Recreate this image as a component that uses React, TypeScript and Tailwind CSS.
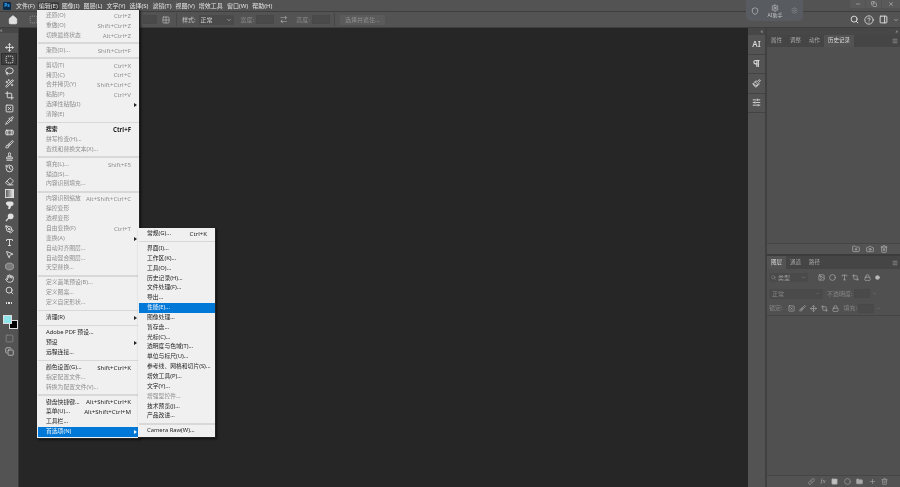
import {
  Bandage,
  Brush,
  ChevronDown,
  Circle,
  Crop,
  Eraser,
  Folder,
  FolderPlus,
  Grid2x2,
  Hand,
  HelpCircle,
  History,
  Home,
  Image,
  Lasso,
  Link,
  Lock,
  Menu,
  Minus,
  Move,
  MousePointer2,
  PenTool,
  Pipette,
  Plus,
  Search,
  Settings,
  Shield,
  SlidersHorizontal,
  Square,
  SquareDashed,
  Stamp,
  Trash2,
  Type,
  Wand2,
  X,
  Camera,
  Paintbrush,
  Pilcrow,
  PanelRight,
  SquareX,
  Copy,
} from "lucide-react";

type Row =
  | { sep: true }
  | { label: string; key?: string; off?: boolean; arrow?: boolean; bold?: boolean; on?: boolean };

const sep: Row = { sep: true };

const editMenu: Row[] = [
  { label: "还原(O)", key: "Ctrl+Z", off: true },
  { label: "重做(O)", key: "Shift+Ctrl+Z", off: true },
  { label: "切换最终状态", key: "Alt+Ctrl+Z", off: true },
  sep,
  { label: "渐隐(D)...", key: "Shift+Ctrl+F", off: true },
  sep,
  { label: "剪切(T)", key: "Ctrl+X", off: true },
  { label: "拷贝(C)", key: "Ctrl+C", off: true },
  { label: "合并拷贝(Y)", key: "Shift+Ctrl+C", off: true },
  { label: "粘贴(P)", key: "Ctrl+V", off: true },
  { label: "选择性粘贴(I)", off: true, arrow: true },
  { label: "清除(E)", off: true },
  sep,
  { label: "搜索", key: "Ctrl+F", bold: true },
  { label: "拼写检查(H)...", off: true },
  { label: "查找和替换文本(X)...", off: true },
  sep,
  { label: "填充(L)...", key: "Shift+F5", off: true },
  { label: "描边(S)...", off: true },
  { label: "内容识别填充...", off: true },
  sep,
  { label: "内容识别缩放", key: "Alt+Shift+Ctrl+C", off: true },
  { label: "操控变形", off: true },
  { label: "透视变形", off: true },
  { label: "自由变换(F)", key: "Ctrl+T", off: true },
  { label: "变换(A)", off: true, arrow: true },
  { label: "自动对齐图层...", off: true },
  { label: "自动混合图层...", off: true },
  { label: "天空替换...", off: true },
  sep,
  { label: "定义画笔预设(B)...", off: true },
  { label: "定义图案...", off: true },
  { label: "定义自定形状...", off: true },
  sep,
  { label: "清理(R)", arrow: true },
  sep,
  { label: "Adobe PDF 预设..." },
  { label: "预设", arrow: true },
  { label: "远程连接..." },
  sep,
  { label: "颜色设置(G)...", key: "Shift+Ctrl+K" },
  { label: "指定配置文件...", off: true },
  { label: "转换为配置文件(V)...", off: true },
  sep,
  { label: "键盘快捷键...", key: "Alt+Shift+Ctrl+K" },
  { label: "菜单(U)...", key: "Alt+Shift+Ctrl+M" },
  { label: "工具栏..." },
  { label: "首选项(N)", arrow: true, on: true },
];

const prefsMenu: Row[] = [
  { label: "常规(G)...", key: "Ctrl+K" },
  sep,
  { label: "界面(I)..." },
  { label: "工作区(K)..." },
  { label: "工具(O)..." },
  { label: "历史记录(H)..." },
  { label: "文件处理(F)..." },
  { label: "导出..." },
  { label: "性能(E)...", on: true },
  { label: "图像处理..." },
  { label: "暂存盘..." },
  { label: "光标(C)..." },
  { label: "透明度与色域(T)..." },
  { label: "单位与标尺(U)..." },
  { label: "参考线、网格和切片(S)..." },
  { label: "增效工具(P)..." },
  { label: "文字(Y)..." },
  { label: "增强型控件...", off: true },
  { label: "技术预览(J)..." },
  { label: "产品改进..." },
  sep,
  { label: "Camera Raw(W)..." },
];

const topMenu = ["文件(F)", "编辑(E)", "图像(I)", "图层(L)", "文字(Y)", "选择(S)", "滤镜(T)", "视图(V)", "增效工具", "窗口(W)", "帮助(H)"];

function GradientTool({ size }: { size?: number }) {
  return (
    <svg width={size} height={size} viewBox="0 0 10 10">
      <defs>
        <linearGradient id="grad-tool">
          <stop offset="0" stopColor="#555" />
          <stop offset="1" stopColor="#eee" />
        </linearGradient>
      </defs>
      <rect x="0.5" y="0.5" width="9" height="9" fill="url(#grad-tool)" stroke="#e2e2e2" />
    </svg>
  );
}

function SmudgeTool({ size }: { size?: number }) {
  return (
    <svg width={size} height={size} viewBox="0 0 10 10" fill="currentColor">
      <path d="M1 2.5C1 1 2.5 .5 4 .5h3c1.5 0 2.5 1 2.5 2.5S8.500 5.500 7 5.500L5.500 9H3.500l.5-3.500C2.500 5.500 1 4 1 2.500z" />
    </svg>
  );
}

function DodgeTool({ size }: { size?: number }) {
  return (
    <svg width={size} height={size} viewBox="0 0 10 10" fill="currentColor">
      <circle cx="6.300" cy="3.700" r="3.200" />
      <path d="M4.300 5.300L1 9" stroke="currentColor" strokeWidth="1.400" />
    </svg>
  );
}

function EllipseTool({ size }: { size?: number }) {
  return (
    <svg width={size} height={size} viewBox="0 0 10 10">
      <ellipse cx="5" cy="5" rx="4.500" ry="3.800" fill="#7a7a7a" stroke="#a8a8a8" />
    </svg>
  );
}

const tools: React.ComponentType<{ size?: number; strokeWidth?: number }>[] = [
  Move, SquareDashed, Lasso, Wand2, Crop, SquareX, Pipette, Bandage, Brush, Stamp,
  History, Eraser, GradientTool, SmudgeTool, DodgeTool, PenTool, Type, MousePointer2, EllipseTool, Hand, Search,
];

function MenuRows({ rows }: { rows: Row[] }) {
  return (
    <>
      {rows.map((r, i) =>
        "sep" in r ? (
          <div key={i} className="flex h-[5.2px] items-center">
            <div className="h-[1.5px] w-full bg-[#d8d8d8]" />
          </div>
        ) : (
          <div
            key={i}
            className={`flex h-[9.85px] items-center justify-between whitespace-nowrap pl-[8px] pr-[8px] text-[5.8px] ${
              r.on ? "bg-[#0078d7] text-[#f0f6fc]" : r.off ? "text-[#8e8e8e]" : "text-[#1e1e1e]"
            } ${r.bold ? "font-bold" : ""}`}
          >
            <span>{r.label}</span>
            {r.key && <span className="text-[6.1px]">{r.key}</span>}
            {r.arrow && (
              <span className={`-mr-[6px] h-0 w-0 border-y-[2.5px] border-l-[3px] border-y-transparent ${r.on ? "border-l-white" : "border-l-[#222]"}`} />
            )}
          </div>
        ),
      )}
    </>
  );
}

function OptLabel({ children }: { children: string }) {
  return <span className="text-[#8a8a8a]">{children}</span>;
}

function Field({ className }: { className: string }) {
  return <div className={`h-[9px] border border-[#484848] bg-[#4a4a4a] ${className}`} />;
}

function DockIcon({ children }: { children: React.ReactNode }) {
  return <div className="flex h-[19.5px] items-center justify-center border-b border-[#434343] text-[#d8d8d8]">{children}</div>;
}

function Tab({ label, active }: { label: string; active?: boolean }) {
  return (
    <div className={`flex h-full items-center whitespace-nowrap px-[4px] text-[5.5px] ${active ? "bg-[#535353] text-[#dcdcdc]" : "text-[#a8a8a8]"}`}>
      {label}
    </div>
  );
}

export default function App() {
  return (
    <div className="relative flex h-[487px] w-[900px] flex-col overflow-hidden bg-[#262626] font-['Noto_Sans','Noto_Sans_CJK_SC',sans-serif] text-[6px] leading-none blur-[0.25px]">
      {/* 顶部菜单 */}
      <div className="flex h-[11px] shrink-0 items-center bg-[#535353] text-[#e4e4e4]">
        <div className="ml-[3px] mr-[5px] flex h-[8px] w-[8px] items-center justify-center rounded-[1px] bg-[#0a2a4a] text-[5px] font-bold text-[#31a8ff]">
          Ps
        </div>
        <div className="flex items-center gap-[4.1px] whitespace-nowrap">
          {topMenu.map((m) => (
            <span key={m} className={m === "编辑(E)" ? "-mx-[1px] bg-[#3c3c3c] px-[1px] py-[1px]" : ""}>
              {m}
            </span>
          ))}
        </div>
        <div className="ml-auto flex h-full items-start gap-[1px] text-[#cfcfcf]">
          <div className="flex h-[8px] w-[15px] items-center justify-center bg-[#5a5a5a]"><Minus size={6} /></div>
          <div className="flex h-[8px] w-[15px] items-center justify-center bg-[#5a5a5a]"><Copy size={6} /></div>
          <div className="flex h-[8px] w-[18px] items-center justify-center bg-[#5a5a5a]"><X size={6} /></div>
        </div>
      </div>

      {/* 选项栏 */}
      <div className="flex h-[17px] shrink-0 items-center whitespace-nowrap border-y border-[#3f3f3f] bg-[#535353] text-[#bdbdbd]">
        <Home size={10} className="ml-[8px] fill-[#e0e0e0] text-[#e0e0e0]" />
        <SquareDashed size={9} className="ml-[11px] text-[#9a9a9a]" />
        <Field className="ml-[105px] w-[14px]" />
        <Grid2x2 size={8} className="ml-[5px] text-[#c0c0c0]" />
        <div className="ml-[6px] h-[13px] w-px bg-[#464646]" />
        <span className="ml-[5px] text-[#c8c8c8]">样式:</span>
        <div className="ml-[3px] flex h-[10px] w-[35px] items-center justify-between bg-[#4a4a4a] px-[2px] text-[#d0d0d0]">
          正常
          <ChevronDown size={6} />
        </div>
        <span className="ml-[7px]"><OptLabel>宽度:</OptLabel></span>
        <Field className="ml-[2px] w-[18px]" />
        <span className="ml-[6px] text-[7px] text-[#b0b0b0]">⇄</span>
        <span className="ml-[9px]"><OptLabel>高度:</OptLabel></span>
        <Field className="ml-[2px] w-[18px]" />
        <div className="ml-[4px] h-[13px] w-px bg-[#464646]" />
        <div className="ml-[5px] flex h-[10px] w-[45px] items-center justify-center bg-[#5a5a5a] text-[#8f8f8f]">选择并遮住...</div>
        <div className="ml-auto mr-px flex items-center gap-[5px] text-[#e0e0e0]">
          <Search size={9} strokeWidth={2.5} />
          <HelpCircle size={10} strokeWidth={2} />
          <PanelRight size={9} strokeWidth={2.5} />
          <ChevronDown size={6} />
        </div>
      </div>

      <div className="flex min-h-0 flex-1">
        {/* 左侧工具栏 */}
        <div className="flex w-[19px] shrink-0 flex-col items-center border-r border-[#3a3a3a] bg-[#535353]">
          <div className="mb-[8px] h-[5px] w-full bg-[#474747] text-[5px] leading-[5px] text-[#bbb]">«</div>
          {tools.map((Icon, i) => (
            <div key={i} className={`flex h-[12.2px] w-[16px] shrink-0 items-center justify-center text-[#e2e2e2] ${i === 1 ? "border border-[#2f2f2f] bg-[#3d3d3d]" : ""}`}>
              <Icon size={9} strokeWidth={2.4} />
            </div>
          ))}
          <div className="flex h-[12px] shrink-0 items-center gap-[1px] text-[#e0e0e0]">
            <span className="h-[1.5px] w-[1.5px] bg-current" />
            <span className="h-[1.5px] w-[1.5px] bg-current" />
            <span className="h-[1.5px] w-[1.5px] bg-current" />
          </div>
          <div className="relative mt-[2px] h-[22px] w-[16px] shrink-0">
            <div className="absolute left-[8px] top-[9px] h-[9px] w-[9px] border border-[#ddd] bg-black" />
            <div className="absolute left-[2px] top-[4px] h-[9px] w-[9px] border border-[#ddd] bg-[#8fe5ea]" />
          </div>
          <Square size={9} className="mt-[1px] text-[#8a8a8a]" />
          <Copy size={9} className="mt-[4px] text-[#cfcfcf]" />
        </div>

        {/* 画布 */}
        <div className="flex-1 bg-[#262626]" />

        {/* 折叠面板 */}
        <div className="flex w-[19px] shrink-0 flex-col border-r-2 border-[#404040] bg-[#535353]">
          <div className="h-[7px] bg-[#474747] pr-[2px] text-right text-[5px] leading-[7px] text-[#bbb]">«</div>
          <DockIcon><span className="text-[8px] font-semibold">AI</span></DockIcon>
          <DockIcon><Pilcrow size={9} strokeWidth={3} /></DockIcon>
          <DockIcon><Paintbrush size={9} strokeWidth={2.5} /></DockIcon>
          <DockIcon><SlidersHorizontal size={9} strokeWidth={2.5} /></DockIcon>
        </div>

        {/* 右侧面板 */}
        <div className="flex w-[133px] shrink-0 flex-col bg-[#505050]">
          <div className="h-[7px] shrink-0 bg-[#474747] pr-[2px] text-right text-[5px] leading-[7px] text-[#bbb]">»</div>
          <div className="flex h-[12px] shrink-0 items-center bg-[#454545] pr-[2px]">
            <Tab label="属性" />
            <Tab label="调整" />
            <Tab label="动作" />
            <Tab label="历史记录" active />
            <Menu size={6} className="ml-auto text-[#b8b8b8]" />
          </div>
          <div className="flex-1" />
          <div className="flex h-[11px] shrink-0 items-center justify-end gap-[6px] border-t border-[#454545] bg-[#535353] pr-[12px] text-[#b8b8b8]">
            <FolderPlus size={8} />
            <Camera size={8} />
            <Trash2 size={8} />
          </div>

          <div className="flex h-[15px] shrink-0 items-center border-t-2 border-[#3c3c3c] bg-[#454545] pr-[2px]">
            <Tab label="图层" active />
            <Tab label="通道" />
            <Tab label="路径" />
            <Menu size={6} className="ml-auto text-[#b8b8b8]" />
          </div>
          <div className="flex h-[17px] shrink-0 items-center gap-[4.5px] px-[2px] text-[#b8b8b8]">
            <div className="mr-[5px] flex h-[9px] w-[39px] items-center gap-[2px] bg-[#4a4a4a] px-[2px] text-[#9a9a9a]">
              <Search size={5} />
              类型
              <ChevronDown size={5} className="ml-auto" />
            </div>
            <Image size={7} />
            <Circle size={7} />
            <Type size={7} />
            <Crop size={7} />
            <Lock size={7} />
            <Circle size={5} className="fill-current" />
          </div>
          <div className="flex h-[15px] shrink-0 items-center whitespace-nowrap px-[2px] text-[#858585]">
            <div className="flex h-[10px] w-[54px] items-center justify-between bg-[#4a4a4a] px-[3px]">
              正常
              <ChevronDown size={5} />
            </div>
            <span className="ml-[4px]">不透明度:</span>
            <Field className="ml-[1px] w-[16px]" />
            <ChevronDown size={5} className="ml-[2px]" />
          </div>
          <div className="flex h-[15px] shrink-0 items-center whitespace-nowrap border-b border-[#454545] px-[2px] text-[#858585]">
            <span>锁定:</span>
            <div className="ml-[5px] flex items-center gap-[4px] text-[#b4b4b4]">
              <SquareX size={7} />
              <Brush size={7} />
              <Move size={7} />
              <Crop size={7} />
              <Lock size={7} />
            </div>
            <span className="ml-[5px]">填充:</span>
            <Field className="ml-[1px] w-[16px]" />
            <ChevronDown size={5} className="ml-[2px]" />
          </div>
          <div className="h-[159px] shrink-0" />
          <div className="flex h-[12px] shrink-0 items-center justify-end gap-[5.5px] border-t border-[#454545] bg-[#535353] pr-[12px] text-[#a8a8a8]">
            <Link size={7} />
            <span className="font-['Liberation_Serif',serif] text-[7px] italic">fx</span>
            <Square size={7} className="fill-[#c0c0c0]" />
            <Circle size={7} />
            <Folder size={7} className="fill-current" />
            <Plus size={7} />
            <Trash2 size={7} />
          </div>
        </div>
      </div>

      {/* AI 助手浮层 */}
      <div className="absolute left-[746px] top-0 flex h-[21px] w-[57px] items-center justify-around rounded-b-[5px] bg-[#585b60] text-[#c4c4c4]">
        <Shield size={8} />
        <div className="flex flex-col items-center gap-[1px] whitespace-nowrap text-[5px]">
          <Settings size={8} />
          AI助手
        </div>
        <Settings size={7} className="text-[#8c8c8c]" />
      </div>

      {/* 编辑菜单 */}
      <div className="absolute left-[37px] top-[10px] w-[103px] border-r border-b border-[#222] bg-[#f0f0f0] py-[1px] pl-px shadow-[1px_1px_2px_rgba(0,0,0,0.6)]">
        <MenuRows rows={editMenu} />
      </div>

      {/* 首选项子菜单 */}
      <div className="absolute left-[138px] top-[228px] w-[78px] border-r border-b border-[#222] bg-[#f0f0f0] py-[1px] pl-px shadow-[1px_1px_2px_rgba(0,0,0,0.6)]">
        <MenuRows rows={prefsMenu} />
      </div>
    </div>
  );
}
